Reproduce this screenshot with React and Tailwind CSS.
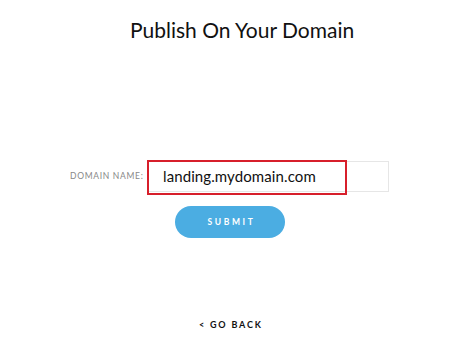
export default function App() {
  return (
    <div className="w-[474px] h-[343px] bg-white flex flex-col items-start font-['Lato',sans-serif]">
      <h1 className="mt-[17px] ml-[130px] text-[21px] leading-[26px] text-[#111] tracking-[0px]">
        Publish On Your Domain
      </h1>
      <div className="mt-[118px] ml-[70px] flex items-center">
        <span className="w-[78px] text-[8.5px] tracking-[0.7px] text-[#888] whitespace-nowrap">DOMAIN NAME:</span>
        <div className="relative w-[241px] h-[31px] border border-[#e6e6e6] flex items-center">
          <span className="ml-[14px] text-[15px] text-[#111] tracking-[0.1px]">landing.mydomain.com</span>
          <div className="absolute left-[-2px] top-[-2px] w-[200px] h-[35px] border-2 border-[#d71f2b]" />
        </div>
      </div>
      <button className="mt-[14px] ml-[175px] w-[110px] h-[32px] rounded-full bg-[#4badE2] text-white text-[8.5px] font-bold tracking-[2.6px] pl-[3px]">
        SUBMIT
      </button>
      <div className="mt-[80px] ml-[199px] text-[9px] font-bold tracking-[1.8px] text-[#111]">
        &lt; GO BACK
      </div>
    </div>
  );
}
